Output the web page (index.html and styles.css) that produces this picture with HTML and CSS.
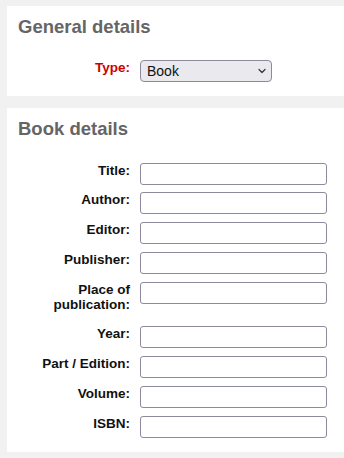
FILE: index.html
```html
<!DOCTYPE html>
<html lang="en">
<head>
<meta charset="utf-8">
<title>Request</title>
<link rel="stylesheet" href="styles.css">
</head>
<body>
<div class="page">
  <section class="panel panel-general">
    <h2 class="panel-title">General details</h2>
    <div class="fields">
      <div class="row">
        <label class="label required" for="type">Type:</label>
        <span class="select-wrap">
          <select id="type" class="select"><option>Book</option></select>
          <svg class="chev" width="8" height="6" viewBox="0 0 8 6" aria-hidden="true"><path d="M1 1.5 L4 4.5 L7 1.5" fill="none" stroke="#333" stroke-width="1.2" stroke-linecap="round" stroke-linejoin="round"/></svg>
        </span>
      </div>
    </div>
  </section>
  <section class="panel panel-book">
    <h2 class="panel-title">Book details</h2>
    <div class="fields">
      <div class="row"><label class="label">Title:</label><input class="input" type="text"></div>
      <div class="row"><label class="label">Author:</label><input class="input" type="text"></div>
      <div class="row"><label class="label">Editor:</label><input class="input" type="text"></div>
      <div class="row"><label class="label">Publisher:</label><input class="input" type="text"></div>
      <div class="row"><label class="label label-multi">Place of<br>publication:</label><input class="input" type="text"></div>
      <div class="row"><label class="label">Year:</label><input class="input" type="text"></div>
      <div class="row"><label class="label">Part / Edition:</label><input class="input" type="text"></div>
      <div class="row"><label class="label">Volume:</label><input class="input" type="text"></div>
      <div class="row"><label class="label">ISBN:</label><input class="input" type="text"></div>
    </div>
  </section>
</div>
</body>
</html>
```
FILE: styles.css
```css
html, body {
  margin: 0;
  padding: 0;
  background: #f0f1f0;
  font-family: "Liberation Sans", Arial, sans-serif;
}
.page {
  padding: 6px 0 0 7px;
  display: flex;
  flex-direction: column;
  gap: 12px;
}
.panel {
  background: #fff;
  padding: 9.5px 0 14px 11px;
}
.panel-title {
  margin: 0;
  font-size: 18.5px;
  line-height: 22px;
  font-weight: bold;
  color: #656565;
}
.fields {
  display: flex;
  flex-direction: column;
  gap: 7.75px;
}
.panel-general .fields {
  margin-top: 22.5px;
}
.panel-book .fields {
  margin-top: 23px;
}
.row {
  display: grid;
  grid-template-columns: 112px auto;
  column-gap: 10px;
  align-items: start;
}
.label {
  text-align: right;
  font-size: 13.5px;
  line-height: 15.5px;
  font-weight: bold;
  color: #111;
}
.label-multi {
  padding-bottom: 6px;
}
.required {
  color: #cc0000;
}
.input {
  box-sizing: border-box;
  width: 187px;
  height: 22px;
  margin: 0;
  border: 1px solid #8e8a9b;
  border-radius: 3px;
  background: #fff;
  padding: 0 4px;
  font: 13px "Liberation Sans", Arial, sans-serif;
}
.select-wrap {
  position: relative;
  width: 132px;
  height: 22px;
  display: block;
}
.select {
  box-sizing: border-box;
  width: 132px;
  height: 22px;
  margin: 0;
  -webkit-appearance: none;
  appearance: none;
  border: 1px solid #8e8a9b;
  border-radius: 4px;
  background: #e9e9ee;
  padding: 0 0 0 6px;
  color: #111;
  font: 14px "Liberation Sans", Arial, sans-serif;
}
.chev {
  position: absolute;
  right: 6px;
  top: 8px;
  pointer-events: none;
}
```
